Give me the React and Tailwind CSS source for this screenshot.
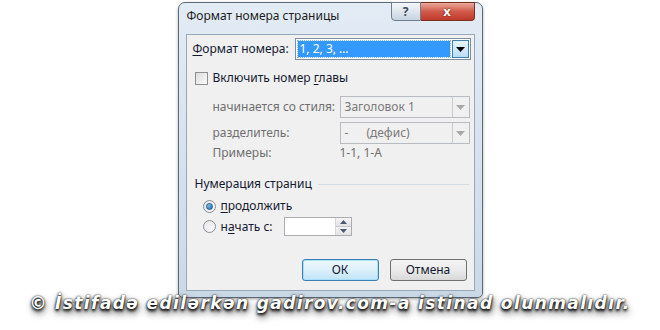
import React from 'react';

const ui = { fontFamily: '"Noto Sans", "Open Sans", sans-serif' };

function Arrow({ color = '#000' }) {
    return (
        <svg width="9" height="5" viewBox="0 0 9 5">
            <path d="M0 0 H9 L4.5 5 Z" fill={color} />
        </svg>
    );
}

function DisabledCombo({ children }) {
    return (
        <div className="flex h-[22px] w-[130px] border border-[#b8bcc0] bg-[#f0f0f0]">
            <div className="flex flex-1 items-center pl-[4px] text-[#7a7a7a]">{children}</div>
            <div className="flex w-[17px] items-center justify-center border-l border-[#c8ccd0]">
                <Arrow color="#a8a8a8" />
            </div>
        </div>
    );
}

function Radio({ checked }) {
    return (
        <div className="flex h-[13px] w-[13px] items-center justify-center rounded-full border border-[#8a8f95] bg-gradient-to-br from-[#e4e6e8] to-[#fdfdfd]">
            {checked && (
                <div className="h-[7px] w-[7px] rounded-full border border-[#1c5180] bg-gradient-to-br from-[#8fd0f4] to-[#1f6fb3]" />
            )}
        </div>
    );
}

export default function App() {
    return (
        <div className="flex h-[330px] w-[660px] flex-col items-center overflow-hidden bg-white" style={ui}>
            {/* dialog window */}
            <div className="mt-[2px] flex h-[296px] w-[305px] flex-col rounded-t-[7px] rounded-b-[5px] border border-[#5d6a78] bg-gradient-to-b from-[#e3ecf5] via-[#d6e2ee] to-[#cbd9e7] px-[7px] pb-[6px] shadow-[0_1px_3px_rgba(0,0,0,0.35)]">
                <div className="flex h-[31px] items-start justify-between">
                    <span className="mt-[4px] pl-[1px] text-[12px] text-[#1c1c1c]">Формат номера страницы</span>
                    <div className="-mt-[1px] flex">
                        <div className="flex h-[19px] w-[30px] items-center justify-center rounded-bl-[4px] border border-[#6f7f90] bg-gradient-to-b from-[#f4f7fa] to-[#c8d4e1] text-[12px] font-bold text-[#3c4a5a]">
                            ?
                        </div>
                        <div className="flex h-[19px] w-[54px] items-center justify-center rounded-br-[4px] border border-l-0 border-[#7a3024] bg-gradient-to-b from-[#e9a99b] via-[#d0594a] to-[#c0392b] text-[13px] font-bold text-white [text-shadow:0_0_2px_#5a1208]">
                            x
                        </div>
                    </div>
                </div>

                {/* client area */}
                <div className="flex flex-1 flex-col border border-[#97a8bb] bg-[#f0f0f0] text-[12px] text-[#151a30]">
                    <div className="mt-[3px] flex h-[22px] items-center">
                        <div className="w-[108px] pl-[6px]">
                            <span className="underline underline-offset-2">Ф</span>ормат номера:
                        </div>
                        <div className="flex h-[22px] w-[176px] border border-[#7f8d9c] bg-white">
                            <div className="m-[2px] flex flex-1 items-center bg-[#3399ff] pl-[2px] text-white outline-1 outline-dotted outline-[#7fbfff]">
                                1, 2, 3, …
                            </div>
                            <div className="my-[1px] mr-[1px] flex w-[17px] items-center justify-center border border-[#3c7fb1] bg-gradient-to-b from-[#e8f5fd] to-[#b9def6]">
                                <Arrow />
                            </div>
                        </div>
                    </div>

                    <div className="mt-[10px] flex h-[16px] items-center pl-[8px]">
                        <div className="h-[13px] w-[13px] border border-[#8e8f8f] bg-gradient-to-br from-[#dcdcdc] to-[#fafafa]" />
                        <span className="ml-[5px]">
                            Включить номер <span className="underline underline-offset-2">г</span>лавы
                        </span>
                    </div>

                    <div className="mt-[10px] flex h-[22px] items-center">
                        <div className="w-[153px] pl-[26px] text-[#6f6f6f]">начинается со стиля:</div>
                        <DisabledCombo>Заголовок 1</DisabledCombo>
                    </div>

                    <div className="mt-[4px] flex h-[22px] items-center">
                        <div className="w-[153px] pl-[26px] text-[#6f6f6f]">разделитель:</div>
                        <DisabledCombo>
                            <span>-</span>
                            <span className="ml-[18px]">(дефис)</span>
                        </DisabledCombo>
                    </div>

                    <div className="mt-[1px] flex h-[16px] items-center text-[#6f6f6f]">
                        <div className="w-[153px] pl-[26px]">Примеры:</div>
                        <span>1-1, 1-А</span>
                    </div>

                    <div className="mt-[15px] flex h-[16px] items-center pl-[8px] pr-[5px]">
                        <span>Нумерация страниц</span>
                        <div className="ml-[6px] h-px flex-1 bg-[#d5dde4]" />
                    </div>

                    <div className="mt-[6px] flex h-[16px] items-center pl-[16px]">
                        <Radio checked />
                        <span className="ml-[5px]">
                            <span className="underline underline-offset-2">п</span>родолжить
                        </span>
                    </div>

                    <div className="mt-[3px] flex h-[19px] items-center pl-[16px]">
                        <Radio />
                        <span className="ml-[5px] w-[63px]">
                            н<span className="underline underline-offset-2">а</span>чать с:
                        </span>
                        <div className="flex h-[19px] w-[68px] border border-[#abadb3] bg-white">
                            <div className="flex-1" />
                            <div className="flex w-[16px] flex-col border-l border-[#d4d6da]">
                                <div className="flex flex-1 items-center justify-center border-b border-[#c4c8cc] bg-gradient-to-b from-[#f6f6f6] to-[#e2e2e2]">
                                    <svg width="7" height="4" viewBox="0 0 7 4"><path d="M0 4 H7 L3.5 0 Z" fill="#4a5a72" /></svg>
                                </div>
                                <div className="flex flex-1 items-center justify-center bg-gradient-to-b from-[#f6f6f6] to-[#e2e2e2]">
                                    <svg width="7" height="4" viewBox="0 0 7 4"><path d="M0 0 H7 L3.5 4 Z" fill="#4a5a72" /></svg>
                                </div>
                            </div>
                        </div>
                    </div>

                    <div className="mt-[23px] flex justify-end gap-[11px] pr-[7px]">
                        <button className="flex h-[22px] w-[77px] items-center justify-center rounded-[3px] border border-[#3c7fb1] bg-gradient-to-b from-[#eef7fd] via-[#dcf0fb] to-[#bfe3f8] text-[12px] text-[#151a30] shadow-[inset_0_0_0_1px_#a8e0fa]">
                            ОК
                        </button>
                        <button className="flex h-[22px] w-[77px] items-center justify-center rounded-[3px] border border-[#707070] bg-gradient-to-b from-[#f4f4f4] via-[#ebebeb] to-[#d8d8d8] text-[12px] text-[#151a30]">
                            Отмена
                        </button>
                    </div>
                </div>
            </div>

            {/* watermark */}
            <div
                className="relative -mt-[7px] whitespace-nowrap text-[17px] font-bold italic tracking-[1.4px] text-white [text-shadow:0_2px_3px_#000,0_0_2px_#000,1px_4px_7px_#333]"
                style={{ fontFamily: '"DejaVu Sans", Verdana, sans-serif' }}
            >
                © İstifadə edilərkən gadirov.com-a istinad olunmalıdır.
            </div>
        </div>
    );
}
